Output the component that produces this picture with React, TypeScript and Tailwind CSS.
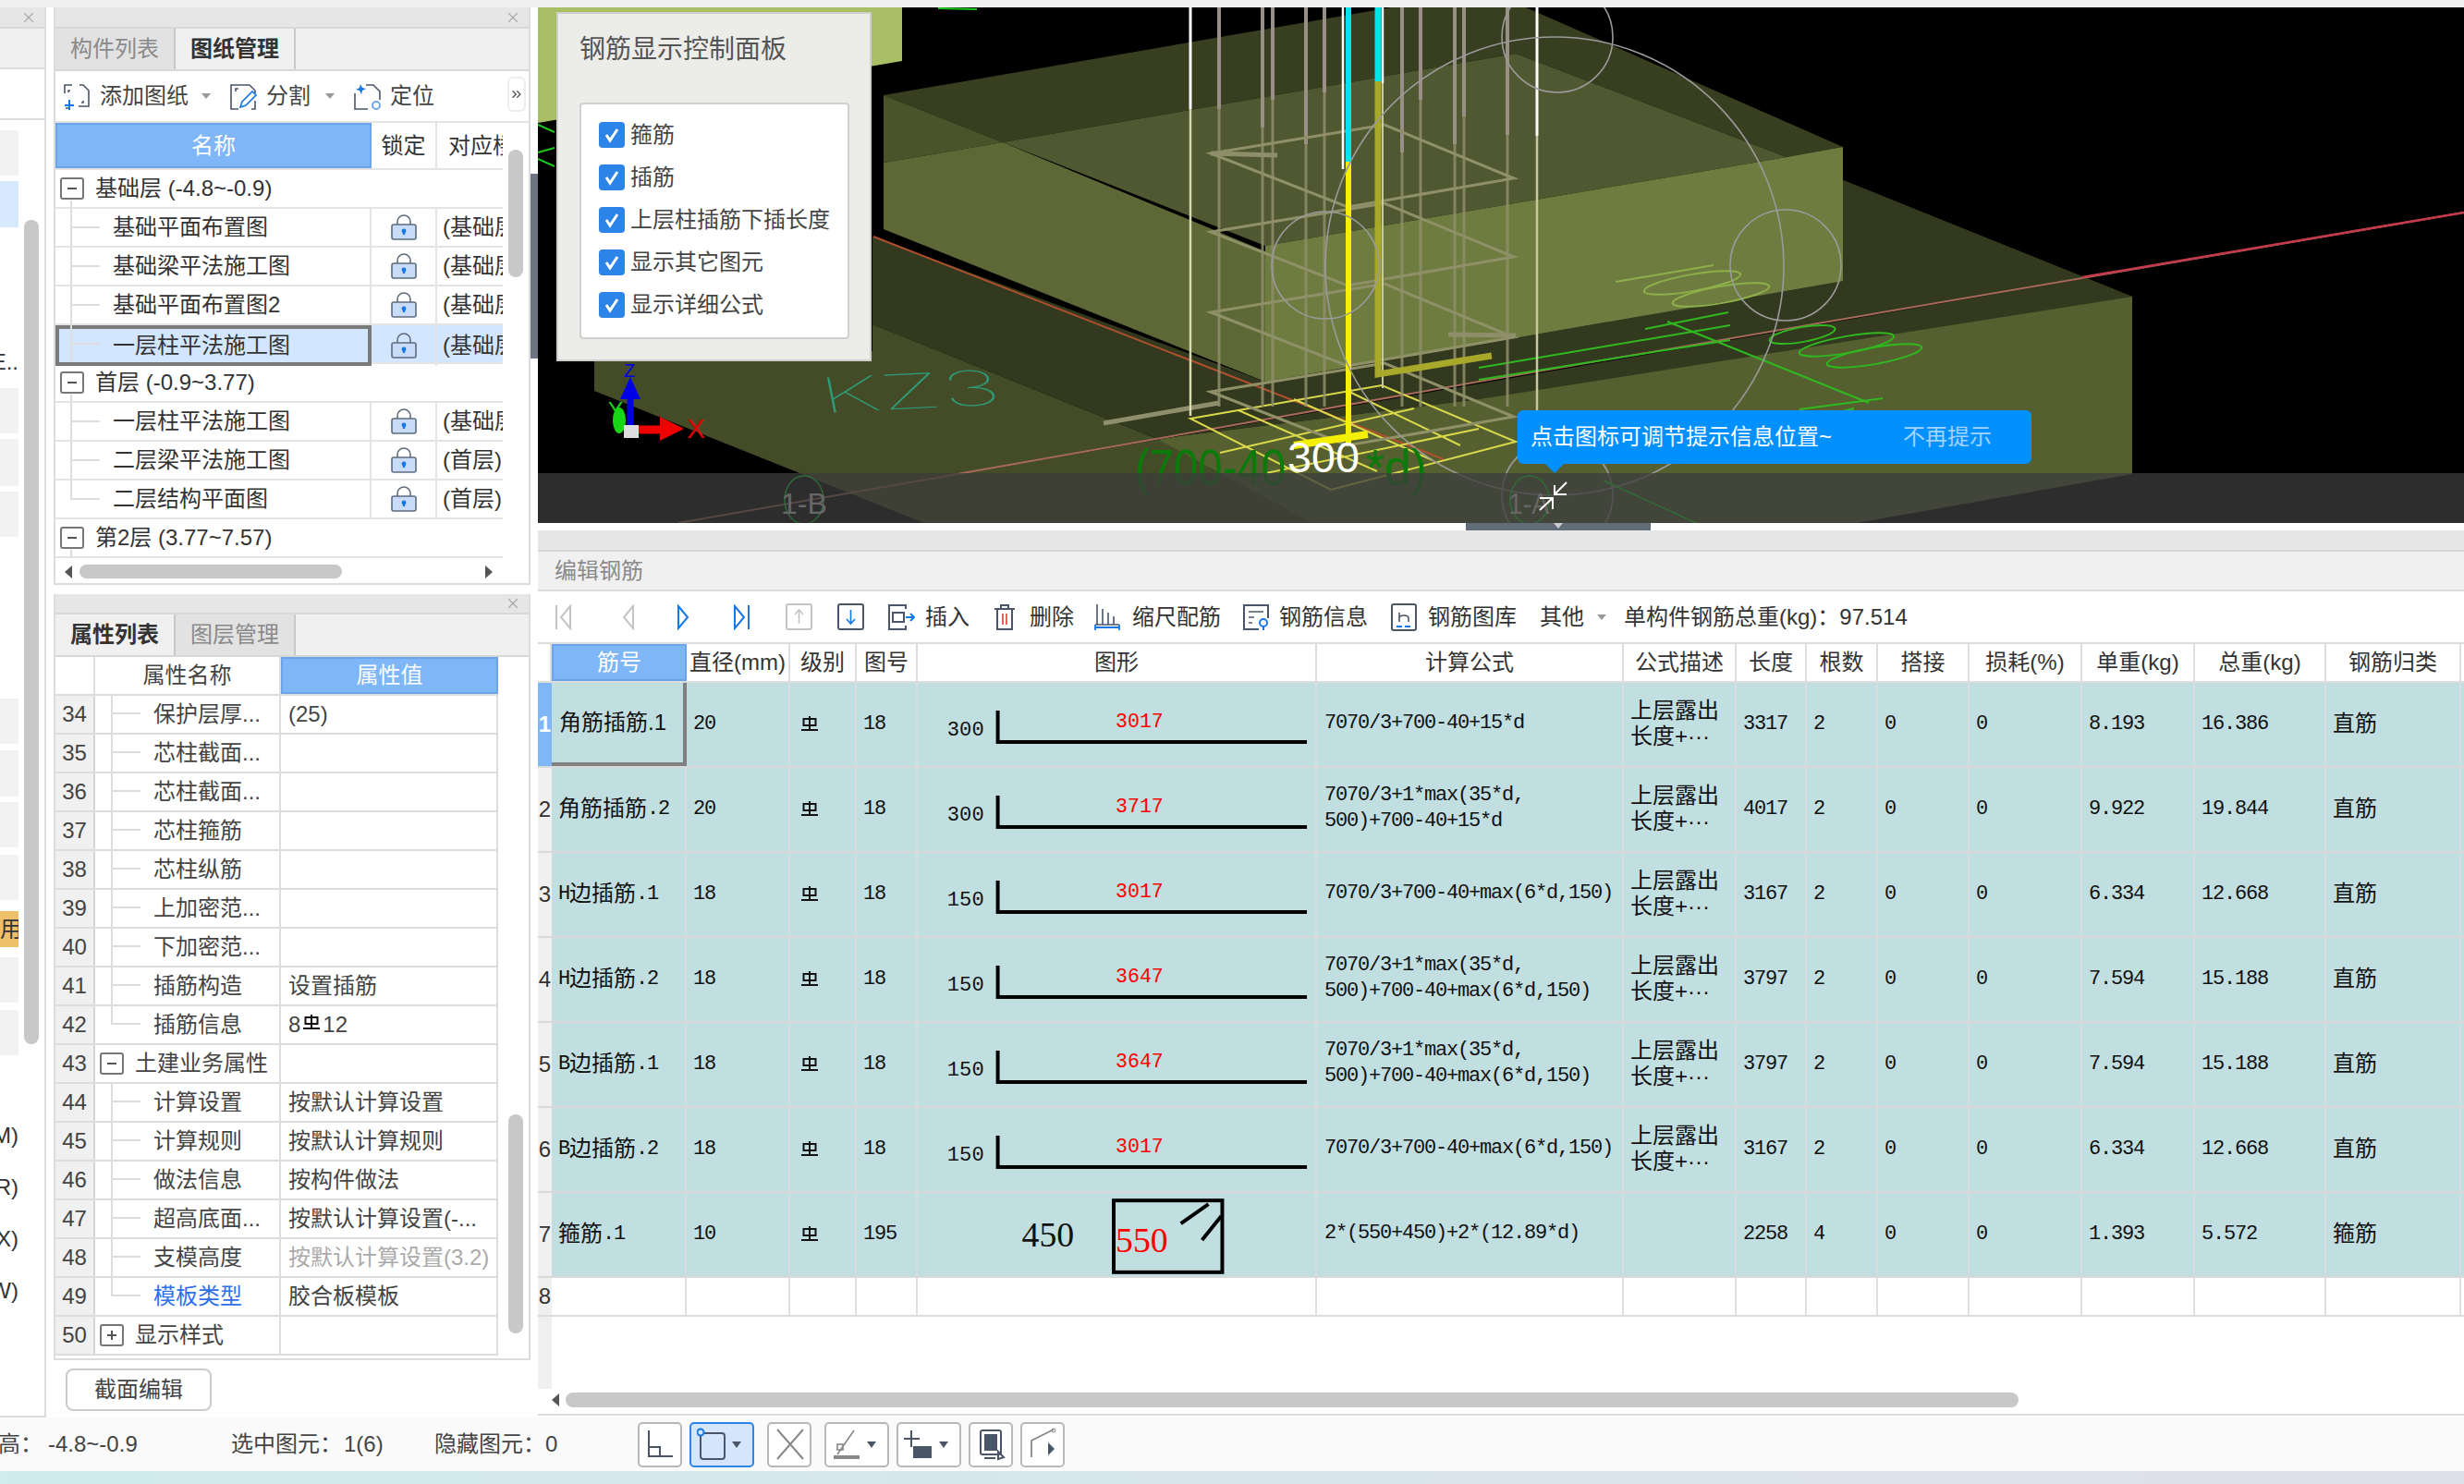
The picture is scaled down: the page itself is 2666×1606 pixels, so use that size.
import { ChevronsRight, X } from "lucide-react";

const drawingRows = [
  { group: "基础层 (-4.8~-0.9)" },
  { name: "基础平面布置图", owner: "(基础层" },
  { name: "基础梁平法施工图", owner: "(基础层" },
  { name: "基础平面布置图2", owner: "(基础层" },
  { name: "一层柱平法施工图", owner: "(基础层", active: true },
  { group: "首层 (-0.9~3.77)" },
  { name: "一层柱平法施工图", owner: "(基础层" },
  { name: "二层梁平法施工图", owner: "(首层)" },
  { name: "二层结构平面图", owner: "(首层)", last: true },
  { group: "第2层 (3.77~7.57)" },
];

const propRows = [
  { n: 34, name: "保护层厚...", value: "(25)" },
  { n: 35, name: "芯柱截面..." },
  { n: 36, name: "芯柱截面..." },
  { n: 37, name: "芯柱箍筋" },
  { n: 38, name: "芯柱纵筋" },
  { n: 39, name: "上加密范..." },
  { n: 40, name: "下加密范..." },
  { n: 41, name: "插筋构造", value: "设置插筋" },
  { n: 42, name: "插筋信息", value: "grade", last: true },
  { n: 43, group: "土建业务属性", open: true },
  { n: 44, name: "计算设置", value: "按默认计算设置" },
  { n: 45, name: "计算规则", value: "按默认计算规则" },
  { n: 46, name: "做法信息", value: "按构件做法" },
  { n: 47, name: "超高底面...", value: "按默认计算设置(-..." },
  { n: 48, name: "支模高度", value: "按默认计算设置(3.2)", dim: true },
  { n: 49, name: "模板类型", value: "胶合板模板", link: true, last: true },
  { n: 50, group: "显示样式" },
];

const columns = ["筋号", "直径(mm)", "级别", "图号", "图形", "计算公式", "公式描述", "长度", "根数", "搭接", "损耗(%)", "单重(kg)", "总重(kg)", "钢筋归类"];

const rebars = [
  { no: "角筋插筋.1", dia: "20", fig: "18", hook: "300", len: "3017", lines: ["7070/3+700-40+15*d"], desc: true, total: "3317", count: "2", unit: "8.193", weight: "16.386", kind: "直筋" },
  { no: "角筋插筋.2", dia: "20", fig: "18", hook: "300", len: "3717", lines: ["7070/3+1*max(35*d,", "500)+700-40+15*d"], desc: true, total: "4017", count: "2", unit: "9.922", weight: "19.844", kind: "直筋" },
  { no: "H边插筋.1", dia: "18", fig: "18", hook: "150", len: "3017", lines: ["7070/3+700-40+max(6*d,150)"], desc: true, total: "3167", count: "2", unit: "6.334", weight: "12.668", kind: "直筋" },
  { no: "H边插筋.2", dia: "18", fig: "18", hook: "150", len: "3647", lines: ["7070/3+1*max(35*d,", "500)+700-40+max(6*d,150)"], desc: true, total: "3797", count: "2", unit: "7.594", weight: "15.188", kind: "直筋" },
  { no: "B边插筋.1", dia: "18", fig: "18", hook: "150", len: "3647", lines: ["7070/3+1*max(35*d,", "500)+700-40+max(6*d,150)"], desc: true, total: "3797", count: "2", unit: "7.594", weight: "15.188", kind: "直筋" },
  { no: "B边插筋.2", dia: "18", fig: "18", hook: "150", len: "3017", lines: ["7070/3+700-40+max(6*d,150)"], desc: true, total: "3167", count: "2", unit: "6.334", weight: "12.668", kind: "直筋" },
  { no: "箍筋.1", dia: "10", fig: "195", stirrup: true, lines: ["2*(550+450)+2*(12.89*d)"], total: "2258", count: "4", unit: "1.393", weight: "5.572", kind: "箍筋" },
];

const gridCols = "grid grid-cols-[15px_146px_112px_72px_66px_432px_332px_122px_76px_77px_99px_122px_122px_142px_146px]";

// numbers in the table come out half width, the way SimSun draws them
function Sim({ text }: { text: string }) {
  return (
    <>
      {text.split(/([\u4e00-\u9fff]+)/).map((part, i) =>
        /[\u4e00-\u9fff]/.test(part) ? (
          <span key={i} className="text-[24px]">{part}</span>
        ) : (
          <span key={i} className="[font-family:'Liberation_Mono',monospace] text-[22px] tracking-[-1.2px]">{part}</span>
        ),
      )}
    </>
  );
}

function GradeMark({ className = "" }: { className?: string }) {
  return (
    <svg viewBox="0 0 20 16" className={`inline-block h-[16px] w-[20px] ${className}`} fill="none" stroke="#111" strokeWidth="2">
      <rect x="3.5" y="3" width="13" height="7" />
      <path d="M10 0v15M1 15h18" />
    </svg>
  );
}

function TreeBox({ open = true }: { open?: boolean }) {
  return (
    <span className="relative block h-[24px] w-[26px] shrink-0 rounded-[3px] border-2 border-[#777] bg-white">
      <span className="absolute top-[9px] left-[6px] h-[2px] w-[10px] bg-[#555]" />
      {!open && <span className="absolute top-[5px] left-[10px] h-[10px] w-[2px] bg-[#555]" />}
    </span>
  );
}

function Lock() {
  return (
    <svg width="28" height="28" viewBox="0 0 28 28" fill="none">
      <path d="M7 12V8a7 7 0 0 1 14 0v4" stroke="#5f6b7d" strokeWidth="1.6" />
      <rect x="1" y="11" width="26" height="16" rx="2" fill="#c8dcf8" stroke="#5f6b7d" strokeWidth="1.6" />
      <path d="M14 16v6" stroke="#1677e6" strokeWidth="2.4" />
      <circle cx="14" cy="18" r="2.4" fill="#1677e6" />
    </svg>
  );
}

function Caret({ className = "" }: { className?: string }) {
  return <span className={`block h-0 w-0 border-x-[5px] border-t-[6px] border-x-transparent border-t-[#999] ${className}`} />;
}

function PanelBar({ h }: { h: string }) {
  return (
    <div className={`flex ${h} items-center justify-end border-b-2 border-[#d8d8d8] bg-[#e6e6e6] pr-[8px]`}>
      <X className="size-[18px] text-[#aaa]" strokeWidth={1.6} />
    </div>
  );
}

function Tabs({ items, current }: { items: string[]; current: number }) {
  return (
    <div className="flex h-[46px] border-b-2 border-[#d8d8d8] bg-[#f0f0f0] text-[24px]">
      {items.map((label, i) => (
        <div
          key={label}
          className={`flex w-[130px] items-center justify-center border-r-2 border-[#c8c8c8] ${i === current ? "bg-[#f0f0f0] font-bold text-[#333]" : "bg-[#e2e2e2] text-[#8a8a8a]"}`}
        >
          {label}
        </div>
      ))}
    </div>
  );
}

function AddSheetIcon() {
  return (
    <svg width="30" height="30" viewBox="0 0 30 30" fill="none" stroke="#4a5568" strokeWidth="1.6">
      <path d="M10 3H2v9M18 3h4l6 6v17h-11M3 28h5M8 9H6v2M22 20v2h-2" />
      <path d="M2 25h10M7 19v11" stroke="#1677e6" strokeWidth="2" />
    </svg>
  );
}

function SplitIcon() {
  return (
    <svg width="30" height="30" viewBox="0 0 30 30" fill="none" stroke="#4a5568" strokeWidth="1.6">
      <path d="M2 12V3h20l6 6v3M2 12v17h8M28 20v9h-4M7 10V7h3" />
      <path d="M12 27l2-6 11-11 4 4-11 11z" stroke="#1677e6" />
    </svg>
  );
}

function LocateIcon() {
  return (
    <svg width="30" height="30" viewBox="0 0 30 30" fill="none" stroke="#4a5568" strokeWidth="1.6">
      <path d="M14 3h8l7 7v9M2 12v17h14" />
      <path d="M8 2l2 4 4 1-4 2-1 4-2-4-4-1 4-2z" fill="#1677e6" stroke="none" />
      <circle cx="25" cy="25" r="4" stroke="#6ea7ea" strokeWidth="2" />
    </svg>
  );
}

function DrawingPanel() {
  return (
    <div className="h-[625px] border-2 border-t-0 border-[#dcdcdc] bg-white">
      <PanelBar h="h-[23px]" />
      <Tabs items={["构件列表", "图纸管理"]} current={1} />
      <div className="relative flex h-[56px] items-center border-b-2 border-[#e4e4e4] pl-[8px] text-[24px] text-[#444]">
        <AddSheetIcon />
        <span className="ml-[10px]">添加图纸</span>
        <Caret className="ml-[14px]" />
        <span className="ml-[20px]"><SplitIcon /></span>
        <span className="ml-[10px]">分割</span>
        <Caret className="ml-[16px]" />
        <span className="ml-[20px]"><LocateIcon /></span>
        <span className="ml-[10px]">定位</span>
        <div className="absolute top-[6px] right-[3px] flex h-[38px] w-[20px] items-center justify-center rounded-[6px] border-2 border-[#eee]">
          <ChevronsRight className="size-[16px] text-[#555]" />
        </div>
      </div>
      <div className="flex">
        <div className="w-[484px] overflow-hidden">
          <div className="grid h-[51px] grid-cols-[342px_71px_71px] border-b-2 border-[#e4e4e4] text-[24px]">
            <div className="flex items-center justify-center border-2 border-[#6aa5ec] bg-[#7eb6f7] text-white">名称</div>
            <div className="flex items-center justify-center border-r-2 border-[#e4e4e4] text-[#333]">锁定</div>
            <div className="flex items-center overflow-hidden pl-[12px] whitespace-nowrap text-[#333]">对应楼</div>
          </div>
          {drawingRows.map((row, i) =>
            row.group ? (
              <div key={i} className="relative flex h-[42px] items-center border-b-2 border-[#e4e4e4] pl-[5px] text-[24px] text-[#333]">
                <TreeBox />
                <span className="ml-[12px]">{row.group}</span>
                <span className="absolute top-[33px] left-[16px] h-[9px] w-[2px] bg-[#ddd]" />
              </div>
            ) : (
              <div key={i} className={`grid h-[42px] grid-cols-[342px_71px_71px] border-b-2 border-[#e4e4e4] text-[24px] text-[#333] ${row.active ? "bg-[#d2e7ff]" : ""}`}>
                <div className={`relative flex items-center whitespace-nowrap ${row.active ? "border-4 border-[#7a7a7a] pl-[58px]" : "border-r-2 border-[#e4e4e4] pl-[62px]"}`}>
                  <span className={`absolute ${row.active ? "top-[-6px] left-[12px]" : "top-[-2px] left-[16px]"} ${row.last ? "h-[22px]" : "h-[42px]"} w-[2px] bg-[#ddd]`} />
                  <span className={`absolute ${row.active ? "top-[15px] left-[12px]" : "top-[19px] left-[16px]"} h-[2px] w-[32px] bg-[#ddd]`} />
                  {row.name}
                </div>
                <div className="flex items-center justify-center border-r-2 border-[#e4e4e4]"><Lock /></div>
                <div className="flex items-center overflow-hidden pl-[6px] whitespace-nowrap">{row.owner}</div>
              </div>
            ),
          )}
          <div className="flex h-[29px] items-center">
            <span className="ml-[10px] h-0 w-0 border-y-[7px] border-r-[8px] border-y-transparent border-r-[#555]" />
            <span className="ml-[8px] h-[15px] w-[284px] rounded-full bg-[#c8c8c8]" />
            <span className="ml-[155px] h-0 w-0 border-y-[7px] border-l-[8px] border-y-transparent border-l-[#555]" />
          </div>
        </div>
        <div className="mt-[29px] ml-[6px] h-[138px] w-[16px] rounded-full bg-[#c8c8c8]" />
      </div>
    </div>
  );
}

function PropertyPanel() {
  return (
    <div className="h-[829px] border-2 border-t-0 border-[#dcdcdc] bg-white">
      <PanelBar h="h-[22px]" />
      <Tabs items={["属性列表", "图层管理"]} current={0} />
      <div className="flex">
        <div className="w-[479px] text-[24px] text-[#444]">
          <div className="grid h-[42px] grid-cols-[43px_201px_235px] border-b-2 border-[#ddd]">
            <div className="border-r-2 border-[#ddd]" />
            <div className="flex items-center justify-center border-r-2 border-[#ddd]">属性名称</div>
            <div className="flex items-center justify-center border-2 border-[#6aa5ec] bg-[#7eb6f7] text-white">属性值</div>
          </div>
          {propRows.map((row) => (
            <div key={row.n} className="grid h-[42px] grid-cols-[43px_201px_235px] border-b-2 border-[#ddd]">
              <div className="flex items-center justify-center border-r-2 border-[#d4d4d4] bg-[#f0f0f0]">{row.n}</div>
              {row.group ? (
                <>
                  <div className="flex items-center border-r-2 border-[#ddd] pl-[5px] whitespace-nowrap">
                    <TreeBox open={!!row.open} />
                    <span className="ml-[12px]">{row.group}</span>
                  </div>
                  <div className="border-r-2 border-[#ddd]" />
                </>
              ) : (
                <>
                  <div className={`relative flex items-center border-r-2 border-[#ddd] pl-[63px] whitespace-nowrap ${row.link ? "text-[#2f6fe8]" : ""}`}>
                    <span className={`absolute top-[-2px] left-[17px] ${row.last ? "h-[22px]" : "h-[42px]"} w-[2px] bg-[#ddd]`} />
                    <span className="absolute top-[18px] left-[17px] h-[2px] w-[32px] bg-[#ddd]" />
                    {row.name}
                  </div>
                  <div className={`flex items-center border-r-2 border-[#ddd] pl-[8px] whitespace-nowrap ${row.dim ? "text-[#aaa]" : ""}`}>
                    {row.value === "grade" ? (
                      <>
                        8<GradeMark className="mx-[2px] -translate-y-[3px]" />12
                      </>
                    ) : (
                      row.value
                    )}
                  </div>
                </>
              )}
            </div>
          ))}
        </div>
        <div className="mt-[495px] ml-[11px] h-[237px] w-[16px] rounded-full bg-[#c8c8c8]" />
      </div>
    </div>
  );
}

function Scene() {
  const hoops = [0, 85, 172, 258];
  const bars = [
    { x: 1319, top: 118 },
    { x: 1366, top: 138 },
    { x: 1377, top: 108 },
    { x: 1413, top: 156 },
    { x: 1433, top: 100 },
    { x: 1517, top: 165 },
    { x: 1537, top: 108 },
    { x: 1574, top: 156 },
    { x: 1584, top: 126 },
    { x: 1631, top: 146 },
  ];
  return (
    <svg viewBox="582 8 2084 558" className="absolute inset-0 h-full w-full">
      <rect x="582" y="8" width="2084" height="558" fill="#000" />
      <path d="M582 8h394v58l-394 67z" fill="#a8bf65" />
      <path d="M582 135l18 8M582 165l18-5M582 172l18 8M1015 9l42 1" stroke="#19c819" strokeWidth="2" />

      {/* slab and footing faces */}
      <polygon points="643,380 643,423 1000,566 2008,566 2307,513 2307,321 1994,195 1600,432 1252,475 944,351 944,380" fill="#444c27" />
      <polygon points="1252,475 1600,432 2307,321 2307,513 2008,566 1420,566" fill="#555f30" />
      <polygon points="944,256 1369,413 1994,304 1994,195 2307,321 1600,432 1252,475 944,351" fill="#33391e" />
      <polygon points="956,103 1610,-10 1994,159 1933,170 1640,58 1085,154" fill="#383e20" />
      <polygon points="956,103 1085,154 956,176" fill="#4a5329" />
      <polygon points="1085,154 1640,58 1933,170 1369,266" fill="#4f5830" />
      <polygon points="956,176 1085,154 1369,272 1369,413 956,248" fill="#5d6836" />
      <polygon points="1369,266 1933,170 1994,159 1994,304 1369,413" fill="#6f7c40" />

      {/* axis lines */}
      <path d="M945 256L1562 497" stroke="#b0502f" strokeWidth="2" />
      <path d="M2666 230L1600 413L1036 513L734 566" stroke="#a86a5a" strokeWidth="2" />
      <path d="M2253 300L2666 230" stroke="#c43a4a" strokeWidth="2.5" />

      {/* dimension work */}
      <g fill="none" stroke="#8db04a" strokeWidth="2">
        <path d="M1748 305l106-18" />
        <ellipse cx="1831" cy="306" rx="53" ry="9" transform="rotate(-10 1831 306)" />
        <ellipse cx="1862" cy="319" rx="53" ry="9" transform="rotate(-10 1862 319)" />
      </g>
      <g fill="none" stroke="#2fb81f" strokeWidth="2">
        <path d="M1600 398l272-46M1600 411l272-43M1804 348l218 88M1780 356l90-18M1947 443l90-12M1886 470l120-28" />
        <ellipse cx="1998" cy="373" rx="52" ry="9" transform="rotate(-10 1998 373)" />
        <ellipse cx="2028" cy="385" rx="52" ry="9" transform="rotate(-10 2028 385)" />
        <ellipse cx="1950" cy="362" rx="36" ry="8" transform="rotate(-10 1950 362)" />
      </g>
      <text transform="matrix(1,-0.05,0.2,1,890,447)" fontFamily="Inter" fontWeight="100" fontSize="52" fill="#2e9b78" textLength="196" lengthAdjust="spacingAndGlyphs">KZ3</text>

      {/* foot mesh */}
      <g fill="none" stroke="#d8d84a" strokeWidth="2">
        <path d="M1288 453l207-36 145 61-200 52zM1340 444l150 66M1400 432l150 66M1460 424l120 58M1320 490l210-48M1370 512l230-48" />
      </g>

      {/* column bars */}
      {bars.map((b) => (
        <g key={b.x}>
          <path d={`M${b.x} 8V${b.top}`} stroke="#9a8f86" strokeWidth="4" />
          <path d={`M${b.x} ${b.top}V440`} stroke="#8e8e6a" strokeWidth="3" strokeOpacity="0.85" />
        </g>
      ))}
      {hoops.map((dy) => (
        <path key={dy} d={`M1310 ${166 + dy}L1498 ${135 + dy}L1638 ${193 + dy}L1458 ${224 + dy}Z`} fill="none" stroke="#8f9068" strokeWidth="3" />
      ))}
      <path d="M1310 166l72 2M1567 362l73 1M1194 458l125-22" stroke="#8e8e6a" strokeWidth="5" fill="none" />
      <path d="M1288 8V118" stroke="#fff" strokeWidth="3" />
      <path d="M1288 118V450" stroke="#d8d8b0" strokeWidth="2.5" />
      <path d="M1663 8V147" stroke="#fff" strokeWidth="3" />
      <path d="M1663 147V444" stroke="#c8c8a0" strokeWidth="2.5" />
      <path d="M1453 8V183" stroke="#fff" strokeWidth="2.5" />
      <path d="M1496 8V90" stroke="#fff" strokeWidth="2.5" />
      <path d="M1496 90V420" stroke="#c8c8a0" strokeWidth="2" />
      <path d="M1491 8V88" stroke="#00e5e5" strokeWidth="7" />
      <path d="M1491 88V405L1614 385" stroke="#a8a82a" strokeWidth="7" fill="none" />
      <path d="M1459 8V175" stroke="#00e5e5" strokeWidth="6" />
      <path d="M1459 175V481" stroke="#f5f000" strokeWidth="6" />
      <path d="M1400 482l80-12" stroke="#f5f000" strokeWidth="8" />

      {/* ring marks */}
      <g fill="none" stroke="#9a9a9a" strokeWidth="1.6">
        <circle cx="1434" cy="287" r="58" />
        <circle cx="1932" cy="287" r="60" />
        <circle cx="1685" cy="40" r="60" />
        <circle cx="1685" cy="536" r="60" />
        <circle cx="1682" cy="288" r="248" />
      </g>

      <text x="1228" y="525" fontFamily="Liberation Sans" fontSize="56" fill="#0a7a0a" textLength="163" lengthAdjust="spacingAndGlyphs">(700-40</text>
      <text x="1478" y="525" fontFamily="Liberation Sans" fontSize="56" fill="#0a7a0a" textLength="66" lengthAdjust="spacingAndGlyphs">*d)</text>
      <text x="1393" y="511" fontFamily="Liberation Sans" fontSize="46" fill="#fff" textLength="78" lengthAdjust="spacingAndGlyphs">300</text>

      {/* axis gizmo */}
      <path d="M682 460V430" stroke="#0000e6" strokeWidth="7" />
      <path d="M682 408l11 24h-22z" fill="#0000e6" />
      <text x="675" y="408" fontFamily="Liberation Sans" fontSize="20" fill="#0000e6">Z</text>
      <ellipse cx="670" cy="455" rx="7" ry="14" fill="#16d616" />
      <text x="658" y="452" fontFamily="Liberation Sans" fontSize="24" fill="#16d616">Y</text>
      <path d="M690 465h26" stroke="#f00000" strokeWidth="9" />
      <path d="M740 464l-26 13v-26z" fill="#f00000" />
      <text x="743" y="474" fontFamily="Liberation Sans" fontSize="30" fill="#e00000">X</text>
      <rect x="675" y="460" width="16" height="14" fill="#ddd" />

      {/* bottom translucent strip */}
      <rect x="582" y="512" width="2084" height="54" fill="#3c3c3c" fillOpacity="0.75" />
      <g fill="none" stroke="#2f6e38" strokeWidth="1.4">
        <ellipse cx="870" cy="541" rx="21" ry="26" />
        <ellipse cx="1655" cy="541" rx="21" ry="26" />
        <path d="M1735 520l100 46" />
      </g>
      <text x="845" y="556" fontFamily="Liberation Sans" fontSize="32" fill="#666" textLength="50" lengthAdjust="spacingAndGlyphs">1-B</text>
      <text x="1632" y="556" fontFamily="Liberation Sans" fontSize="32" fill="#666" textLength="44" lengthAdjust="spacingAndGlyphs">1-A</text>
      <path d="M1695 522L1682 535M1682 525v10h13M1666 552L1680 539M1666 539h14v12" stroke="#fff" strokeWidth="2" fill="none" />
    </svg>
  );
}

function ControlPanel() {
  const options = ["箍筋", "插筋", "上层柱插筋下插长度", "显示其它图元", "显示详细公式"];
  return (
    <div className="absolute top-[5px] left-[20px] flex h-[378px] w-[341px] flex-col border-2 border-[#cfcfcf] bg-[#ecece8] pt-[23px] pl-[23px]">
      <div className="text-[28px] leading-[32px] text-[#555]">钢筋显示控制面板</div>
      <div className="mt-[41px] flex h-[256px] w-[292px] flex-col gap-[18px] rounded-[4px] border-2 border-[#d0d0d0] bg-white pt-[19px] pl-[19px]">
        {options.map((label) => (
          <div key={label} className="flex h-[28px] items-center text-[24px] whitespace-nowrap text-[#444]">
            <svg width="28" height="28" viewBox="0 0 28 28" className="shrink-0">
              <rect width="28" height="28" rx="4" fill="#2d84e8" />
              <path d="M8 14l4 6 8-12" fill="none" stroke="#fff" strokeWidth="3" />
            </svg>
            <span className="ml-[6px]">{label}</span>
          </div>
        ))}
      </div>
    </div>
  );
}

function HintBubble() {
  return (
    <div className="absolute top-[436px] left-[1060px] flex h-[58px] w-[556px] items-center rounded-[6px] bg-[#0091ff] pl-[14px] text-[24px] whitespace-nowrap text-white">
      <span>点击图标可调节提示信息位置~</span>
      <span className="ml-[77px] text-[#a3d3ff]">不再提示</span>
      <span className="absolute top-[58px] left-[30px] h-0 w-0 border-x-[10px] border-t-[10px] border-x-transparent border-t-[#0091ff]" />
    </div>
  );
}

function NavIcon({ dir, end, on }: { dir: "l" | "r"; end?: boolean; on?: boolean }) {
  const color = on ? "#1677e6" : "#c4c4c4";
  return (
    <svg width="22" height="28" viewBox="0 0 22 28" fill="none" stroke={color} strokeWidth="2">
      {dir === "r" ? <path d="M5 2l10 12L5 26z" /> : <path d="M17 2L7 14l10 12z" />}
      {end && <path d={dir === "r" ? "M20 1v26" : "M2 1v26"} />}
    </svg>
  );
}

function SquareArrow({ up }: { up?: boolean }) {
  const color = up ? "#c4c4c4" : "#4a5568";
  const arrow = up ? "#c4c4c4" : "#1677e6";
  return (
    <svg width="29" height="29" viewBox="0 0 29 29" fill="none">
      <rect x="1" y="1" width="27" height="27" rx="2" stroke={color} strokeWidth="2" />
      <path d={up ? "M14.5 22V7M10 12l4.5-5 4.5 5" : "M14.5 7v15M10 17l4.5 5 4.5-5"} stroke={arrow} strokeWidth="1.6" />
    </svg>
  );
}

function EditToolbar() {
  return (
    <div className="flex h-[57px] items-center border-b-2 border-[#ddd] pl-[18px] text-[24px] whitespace-nowrap text-[#333]">
      <NavIcon dir="l" end />
      <span className="ml-[46px]"><NavIcon dir="l" /></span>
      <span className="ml-[39px]"><NavIcon dir="r" on /></span>
      <span className="ml-[39px]"><NavIcon dir="r" end on /></span>
      <span className="ml-[38px]"><SquareArrow up /></span>
      <span className="ml-[27px]"><SquareArrow /></span>
      <svg width="30" height="28" viewBox="0 0 30 28" fill="none" className="ml-[25px]">
        <path d="M20 5V1H2v26h18v-4M6 9h12v10H6z" stroke="#4a5568" strokeWidth="2" />
        <path d="M20 14h9M25 10l4 4-4 4" stroke="#1677e6" strokeWidth="2" />
      </svg>
      <span className="ml-[11px]">插入</span>
      <svg width="24" height="30" viewBox="0 0 24 30" fill="none" className="ml-[26px]">
        <path d="M1 6h22M8 6V2h8v4M4 6v22h16V6" stroke="#4a5568" strokeWidth="2" />
        <path d="M10 11v12M14 11v12" stroke="#e53935" strokeWidth="1.6" />
      </svg>
      <span className="ml-[15px]">删除</span>
      <svg width="28" height="30" viewBox="0 0 28 30" fill="none" className="ml-[22px]">
        <path d="M3 1v22M9 6v17M15 10v13M21 14v9M1 23h26" stroke="#4a5568" strokeWidth="1.6" />
        <path d="M1 26h26M1 23v6M27 23v6" stroke="#1677e6" strokeWidth="1.8" />
      </svg>
      <span className="ml-[13px]">缩尺配筋</span>
      <svg width="30" height="30" viewBox="0 0 30 30" fill="none" className="ml-[23px]">
        <path d="M28 16V2H2v26h16" stroke="#4a5568" strokeWidth="2" />
        <path d="M7 9h16M7 15h6M7 21h4" stroke="#4a5568" strokeWidth="1.6" />
        <circle cx="23" cy="21" r="4" stroke="#1677e6" strokeWidth="2" />
        <path d="M23 25v4" stroke="#1677e6" strokeWidth="2" />
      </svg>
      <span className="ml-[10px]">钢筋信息</span>
      <svg width="30" height="30" viewBox="0 0 30 30" fill="none" className="ml-[24px]">
        <rect x="2" y="1" width="26" height="28" rx="2" stroke="#4a5568" strokeWidth="2" />
        <path d="M10 20v-10M10 16c0-4 10-4 10 0v4" stroke="#4a5568" strokeWidth="1.6" />
        <path d="M7 25h16" stroke="#1677e6" strokeWidth="2" strokeDasharray="6 3" />
      </svg>
      <span className="ml-[11px]">钢筋图库</span>
      <span className="ml-[25px]">其他</span>
      <Caret className="ml-[14px]" />
      <span className="ml-[19px]">单构件钢筋总重(kg)：97.514</span>
    </div>
  );
}

function Shape({ row }: { row: (typeof rebars)[number] }) {
  if (row.stirrup) {
    return (
      <svg viewBox="993 0 432 90" className="h-[90px] w-[430px]">
        <text x="1106" y="58" fontFamily="Liberation Serif" fontSize="38" fill="#111">450</text>
        <rect x="1206" y="8" width="118" height="78" fill="none" stroke="#000" strokeWidth="4" />
        <path d="M1279 33l30-21M1302 51l21-26" stroke="#000" strokeWidth="4" />
        <text x="1208" y="64" fontFamily="Liberation Serif" fontSize="38" fill="#f00">550</text>
      </svg>
    );
  }
  return (
    <svg viewBox="993 0 432 90" className="h-[90px] w-[430px]">
      <text x="1025" y="57" fontFamily="Liberation Mono" fontSize="22" fill="#111" textLength="40" lengthAdjust="spacingAndGlyphs">{row.hook}</text>
      <path d="M1080 30v34h336" fill="none" stroke="#000" strokeWidth="4" />
      <text x="1208" y="48" fontFamily="Liberation Mono" fontSize="22" fill="#f00" textLength="52" lengthAdjust="spacingAndGlyphs">{row.len}</text>
    </svg>
  );
}

function RebarTable() {
  const cell = "flex items-center border-r-2 border-[#d9dcdc] pb-[2px] pl-[7px] text-[#111]";
  return (
    <div>
      <div className={`${gridCols} h-[42px] border-b-2 border-[#ddd] text-[24px] text-[#333]`}>
        <div className="border-r-2 border-[#ddd]" />
        {columns.map((title, i) => (
          <div
            key={title}
            className={`flex items-center justify-center whitespace-nowrap ${i === 0 ? "border-2 border-[#6aa5ec] bg-[#7eb6f7] text-white" : "border-r-2 border-[#ddd]"}`}
          >
            {title}
          </div>
        ))}
      </div>
      {rebars.map((row, i) => (
        <div key={row.no} className={`${gridCols} h-[92px] border-b-2 border-[#d9d9d9] bg-[#c1dee0] whitespace-nowrap`}>
          <div className={`flex items-center justify-center text-[24px] ${i === 0 ? "bg-[#7eb6f7] font-bold text-white" : "bg-[#f0f0f0] text-[#333]"}`}>{i + 1}</div>
          {i === 0 ? (
            <div className="flex items-center border-r-4 border-b-4 border-[#808080] pl-[8px] text-[24px] text-[#111]">{row.no}</div>
          ) : (
            <div className={cell}><Sim text={row.no} /></div>
          )}
          <div className={cell}><Sim text={row.dia} /></div>
          <div className={cell}><GradeMark className="ml-[4px]" /></div>
          <div className={cell}><Sim text={row.fig} /></div>
          <div className="flex items-center border-r-2 border-[#d9dcdc]"><Shape row={row} /></div>
          <div className="flex flex-col justify-center border-r-2 border-[#d9dcdc] pb-[2px] pl-[8px] leading-[28px] text-[#111]">
            {row.lines.map((line) => (
              <div key={line}><Sim text={line} /></div>
            ))}
          </div>
          <div className="flex flex-col justify-center border-r-2 border-[#d9dcdc] pb-[2px] pl-[7px] text-[24px] leading-[28px] text-[#111]">
            {row.desc && (
              <>
                <div>上层露出</div>
                <div>长度+···</div>
              </>
            )}
          </div>
          <div className={cell}><Sim text={row.total} /></div>
          <div className={cell}><Sim text={row.count} /></div>
          <div className={cell}><Sim text="0" /></div>
          <div className={cell}><Sim text="0" /></div>
          <div className={cell}><Sim text={row.unit} /></div>
          <div className={cell}><Sim text={row.weight} /></div>
          <div className={cell}><Sim text={row.kind} /></div>
        </div>
      ))}
      <div className={`${gridCols} h-[42px] border-b-2 border-[#ddd] bg-white`}>
        <div className="flex items-center justify-center bg-[#f0f0f0] text-[24px] text-[#333]">8</div>
        {columns.map((title) => (
          <div key={title} className="border-r-2 border-[#e0e0e0]" />
        ))}
      </div>
    </div>
  );
}

function ToolButton({ wide, on, children }: { wide?: boolean; on?: boolean; children: React.ReactNode }) {
  return (
    <div className={`flex h-[49px] items-center rounded-[5px] border-2 pl-[6px] ${wide ? "w-[70px]" : "w-[48px]"} ${on ? "border-[#2d84e8] bg-[#d5e5fb]" : "border-[#b8b8b8] bg-white"}`}>
      {children}
      {wide && <span className="ml-[6px] h-0 w-0 border-x-[5px] border-t-[7px] border-x-transparent border-t-[#4a5568]" />}
    </div>
  );
}

function StatusBar() {
  return (
    <div className="flex h-[58px] items-center whitespace-nowrap bg-[#fafafa] text-[24px] text-[#444]">
      <span className="-ml-[2px] w-[54px]">高：</span>
      <span className="w-[198px]">-4.8~-0.9</span>
      <span className="w-[122px]">选中图元：</span>
      <span className="w-[98px]">1(6)</span>
      <span className="w-[120px]">隐藏图元：</span>
      <span className="w-[100px]">0</span>
      <div className="flex items-center gap-[8px]">
        <ToolButton>
          <svg width="30" height="34" viewBox="0 0 30 34" fill="none" stroke="#4a5568" strokeWidth="2"><path d="M4 2v28h26M4 20h12v10" /></svg>
        </ToolButton>
        <ToolButton wide on>
          <svg width="32" height="36" viewBox="0 0 32 36" fill="none"><rect x="4" y="6" width="26" height="28" rx="3" stroke="#4a5568" strokeWidth="2" /><circle cx="4" cy="5" r="3.5" stroke="#1677e6" strokeWidth="2" fill="#d5e5fb" /></svg>
        </ToolButton>
        <span className="ml-[6px]">
          <ToolButton>
            <svg width="34" height="36" viewBox="0 0 34 36" fill="none" stroke="#888" strokeWidth="2"><path d="M3 2l28 32M31 2L3 34" /></svg>
          </ToolButton>
        </span>
        <span className="ml-[6px]">
          <ToolButton wide>
            <svg width="32" height="34" viewBox="0 0 32 34" fill="none" stroke="#888" strokeWidth="1.6"><path d="M24 2L6 28" /><rect x="6" y="17" width="6" height="6" /><path d="M2 31h28" strokeWidth="4" /></svg>
          </ToolButton>
        </span>
        <ToolButton wide>
          <svg width="32" height="34" viewBox="0 0 32 34" fill="none"><path d="M8 2v18M0 11h17" stroke="#4a5568" strokeWidth="2" /><rect x="10" y="19" width="20" height="13" fill="#4a5568" /></svg>
        </ToolButton>
        <ToolButton>
          <svg width="32" height="36" viewBox="0 0 32 36" fill="none"><rect x="5" y="3" width="22" height="26" rx="2" stroke="#4a5568" strokeWidth="2" /><rect x="9" y="7" width="14" height="18" fill="#4a5568" /><path d="M24 26l6 6-6 2zM9 33h12" stroke="#4a5568" strokeWidth="2" /></svg>
        </ToolButton>
        <ToolButton>
          <svg width="32" height="36" viewBox="0 0 32 36" fill="none"><path d="M4 32V14L28 2" stroke="#888" strokeWidth="1.8" /><circle cx="28" cy="3" r="2" stroke="#888" /><path d="M22 16v14l7-7z" fill="#4a5568" /></svg>
        </ToolButton>
      </div>
    </div>
  );
}

function SideList() {
  return (
    <aside className="flex w-[50px] flex-col border-r-2 border-b-2 border-[#dcdcdc]">
      <PanelBar h="h-[23px]" />
      <div className="h-[44px] border-b-2 border-[#ddd] bg-[#f0f0f0]" />
      <div className="h-[55px] border-b-2 border-[#ddd] bg-white" />
      <div className="relative flex-1">
        <div className="w-[20px] whitespace-nowrap">
          <div className="mt-[11px] h-[49px] bg-[#f2f2f2]" />
          <div className="mt-[6px] h-[50px] bg-[#d6e9ff]" />
          <div className="mt-[132px] flex h-[28px] justify-end text-[24px] leading-[28px] text-[#333]">E..</div>
          <div className="mt-[14px] h-[49px] bg-[#f2f2f2]" />
          <div className="mt-[6px] h-[51px] bg-[#f2f2f2]" />
          <div className="mt-[6px] h-[49px] bg-[#f2f2f2]" />
          <div className="mt-[175px] h-[49px] bg-[#f2f2f2]" />
          <div className="mt-[7px] h-[50px] bg-[#f2f2f2]" />
          <div className="mt-[6px] h-[49px] bg-[#f2f2f2]" />
          <div className="mt-[8px] h-[49px] bg-[#f2f2f2]" />
          <div className="mt-[12px] h-[39px] overflow-hidden bg-[#eec06a] text-right text-[24px] leading-[39px] text-[#333]">用</div>
          <div className="mt-[11px] h-[49px] bg-[#f2f2f2]" />
          <div className="mt-[8px] h-[49px] bg-[#f2f2f2]" />
          <div className="mt-[73px] flex flex-col items-end gap-[28px] text-[24px] leading-[28px] text-[#333]">
            <span>M)</span>
            <span>R)</span>
            <span>X)</span>
            <span>W)</span>
          </div>
        </div>
        <div className="absolute top-[108px] left-[26px] h-[892px] w-[16px] rounded-full bg-[#c8c8c8]" />
      </div>
    </aside>
  );
}

export default function App() {
  return (
    <div className="flex h-[1606px] w-[2666px] flex-col overflow-hidden bg-white [font-family:'Liberation_Sans','Noto_Sans_CJK_SC',sans-serif]">
      <div className="h-[8px] bg-[#f0f0f0]" />
      <div className="flex h-[1526px]">
        <SideList />

        {/* drawing and property panels */}
        <div className="ml-[8px] flex w-[516px] flex-col">
          <DrawingPanel />
          <div className="h-[10px]" />
          <PropertyPanel />
          <div className="mt-[9px] ml-[13px] flex h-[46px] w-[158px] items-center justify-center rounded-[8px] border-2 border-[#ccc] text-[24px] text-[#444]">截面编辑</div>
        </div>

        {/* splitter */}
        <div className="relative w-[8px] bg-white">
          <div className="absolute top-[180px] h-[200px] w-[8px] bg-[#6b7480]" />
        </div>

        {/* 3D view and rebar editor */}
        <div className="flex w-[2084px] flex-col">
          <div className="relative h-[558px] overflow-hidden">
            <Scene />
            <ControlPanel />
            <HintBubble />
          </div>
          <div className="relative h-[8px] bg-white">
            <div className="ml-[1004px] flex h-[8px] w-[200px] justify-center bg-[#626c78]">
              <span className="h-0 w-0 border-x-[5px] border-t-[6px] border-x-transparent border-t-[#ccc]" />
            </div>
          </div>
          <div className="h-[23px] border-b-2 border-[#d8d8d8] bg-[#e6e6e6]" />
          <div className="flex h-[43px] items-center border-b-2 border-[#ddd] bg-[#f0f0f0] pl-[18px] text-[24px] text-[#8a8a8a]">编辑钢筋</div>
          <EditToolbar />
          <RebarTable />
          <div className="flex h-[78px]">
            <div className="w-[15px] bg-[#f0f0f0]" />
          </div>
          <div className="flex h-[29px] items-center border-b-2 border-[#ddd] pb-[4px]">
            <span className="ml-[15px] h-0 w-0 border-y-[7px] border-r-[8px] border-y-transparent border-r-[#555]" />
            <span className="ml-[7px] h-[16px] w-[1572px] rounded-full bg-[#c8c8c8]" />
          </div>
        </div>
      </div>
      <StatusBar />
      <div className="h-[14px] bg-gradient-to-r from-[#d0ecee] to-[#dfdfe9]" />
    </div>
  );
}
